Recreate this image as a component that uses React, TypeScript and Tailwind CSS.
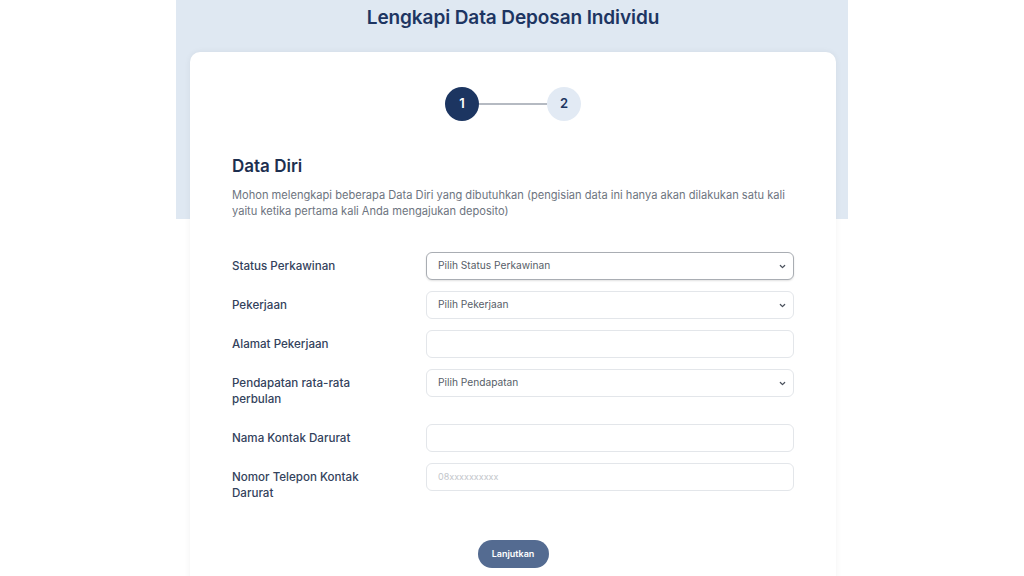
import React from 'react';

const ChevronDown: React.FC = () => (
  <svg width="9" height="9" viewBox="0 0 10 10" fill="none" className="shrink-0">
    <path d="M2.6 3.9 5 6.2l2.4-2.3" stroke="#4a515c" strokeWidth="1.4" strokeLinecap="round" strokeLinejoin="round" />
  </svg>
);

interface FieldProps {
  label: React.ReactNode;
  kind: 'select' | 'text';
  placeholder?: string;
  active?: boolean;
}

const Field: React.FC<FieldProps> = ({ label, kind, placeholder, active }) => (
  <div className="flex items-start mb-[11px]">
    <div className="w-[194px] shrink-0 py-[6px] text-[11.6px] leading-[16px] font-medium text-[#33425c] pr-8">{label}</div>
    <div
      className={`flex-1 h-[28px] rounded-[6px] bg-white flex items-center justify-between pl-[11px] pr-[6px] ${
        active ? 'border border-[#a9adb3] shadow-[0_1px_2px_rgba(0,0,0,0.12)]' : 'border border-[#e3e6ea]'
      }`}
    >
      {kind === 'select' ? (
        <>
          <span className="text-[10.2px] text-[#565d68]">{placeholder}</span>
          <ChevronDown />
        </>
      ) : (
        <span className="text-[9px] text-[#c3c6cb]">{placeholder}</span>
      )}
    </div>
  </div>
);

export default function App() {
  return (
    <div className="w-full h-[576px] overflow-hidden bg-white flex justify-center font-['Inter','Noto_Sans',sans-serif]">
      <div className="w-[672px] bg-[linear-gradient(to_bottom,#dfe8f2_219px,#ffffff_219px)] pl-[14px] pr-[12px]">
        <h1 className="h-[52px] pt-[5px] text-center text-[19px] leading-[26px] font-semibold text-[#1d3562] tracking-[-0.1px]">
          Lengkapi Data Deposan Individu
        </h1>

        <div className="bg-white rounded-[10px] shadow-[0_0_6px_rgba(0,0,0,0.06)] px-[42px] pt-[35px] h-[560px]">
          <div className="flex items-center justify-center">
            <div className="w-[34px] h-[34px] rounded-full bg-[#1c3561] text-white flex items-center justify-center text-[13px] font-semibold">
              1
            </div>
            <div className="w-[68px] h-[2px] bg-[#b5bac2]" />
            <div className="w-[34px] h-[34px] rounded-full bg-[#e2eaf4] text-[#1c3561] flex items-center justify-center text-[13px] font-semibold">
              2
            </div>
          </div>

          <h2 className="mt-[34px] text-[17px] leading-[22px] font-semibold text-[#1d2f50]">Data Diri</h2>
          <p className="mt-[10px] text-[11.1px] leading-[16px] text-[#6d7480]">
            Mohon melengkapi beberapa Data Diri yang dibutuhkan (pengisian data ini hanya akan dilakukan satu kali yaitu ketika pertama kali Anda mengajukan deposito)
          </p>

          <div className="mt-[33px]">
            <Field label="Status Perkawinan" kind="select" placeholder="Pilih Status Perkawinan" active />
            <Field label="Pekerjaan" kind="select" placeholder="Pilih Pekerjaan" />
            <Field label="Alamat Pekerjaan" kind="text" />
            <Field label="Pendapatan rata-rata perbulan" kind="select" placeholder="Pilih Pendapatan" />
            <Field label="Nama Kontak Darurat" kind="text" />
            <Field label="Nomor Telepon Kontak Darurat" kind="text" placeholder="08xxxxxxxxxx" />
          </div>

          <div className="flex justify-center mt-[33px]">
            <button className="h-[28px] w-[71px] rounded-full bg-[#546b91] text-white text-[9px] font-semibold">
              Lanjutkan
            </button>
          </div>
        </div>
      </div>
    </div>
  );
}
